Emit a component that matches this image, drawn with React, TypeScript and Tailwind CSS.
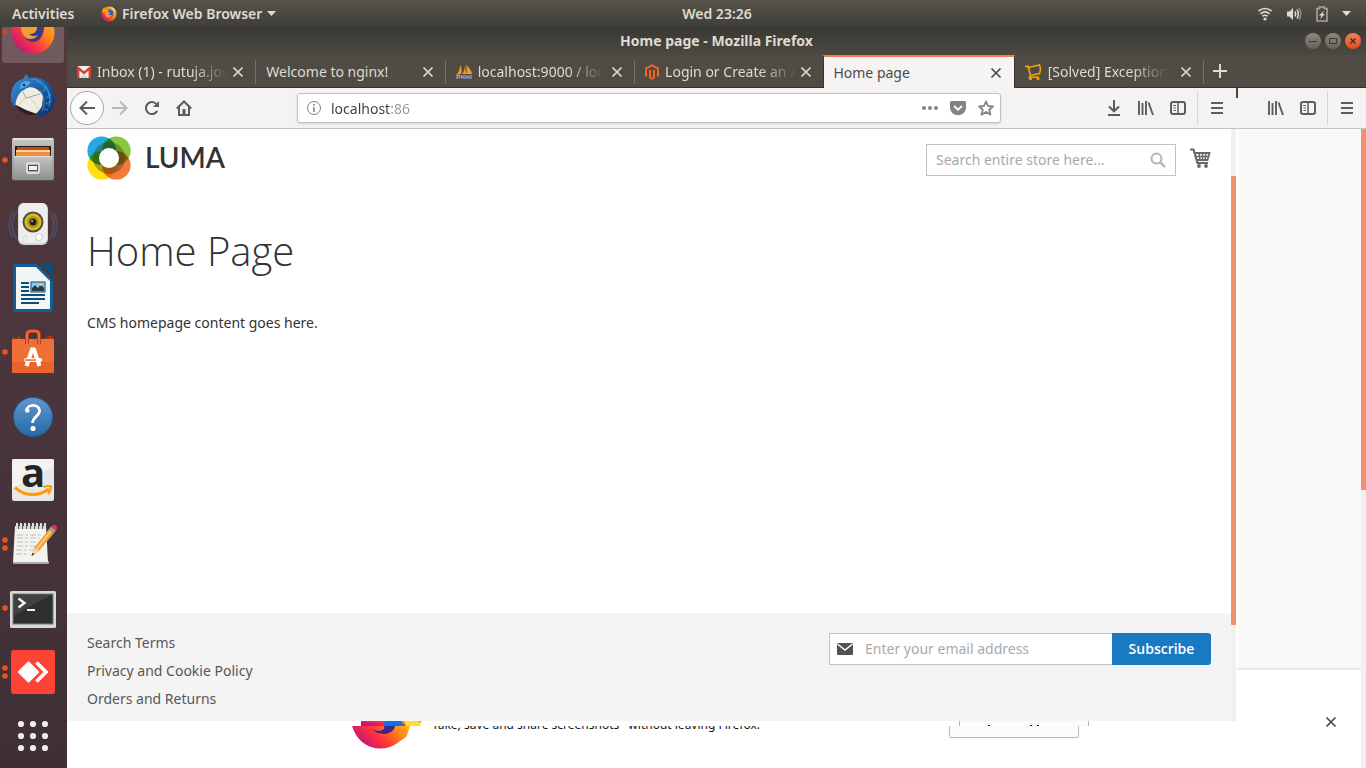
import React from "react";

type IconProps = { className?: string };

const UI = "font-['Noto_Sans',sans-serif]";

/* ---------- dock drawings (each slot is 67 x 64) ---------- */

function FirefoxArt() {
  return (
    <g>
      <defs>
        <linearGradient id="fxBody" x1="1" y1="0.1" x2="0.1" y2="0.9">
          <stop offset="0" stopColor="#ffd53a" />
          <stop offset="0.4" stopColor="#ff8a16" />
          <stop offset="0.72" stopColor="#fb3148" />
          <stop offset="1" stopColor="#b5177f" />
        </linearGradient>
        <linearGradient id="fxGlobe" x1="0.8" y1="0" x2="0.2" y2="1">
          <stop offset="0" stopColor="#0a84ff" />
          <stop offset="1" stopColor="#38207a" />
        </linearGradient>
      </defs>
      <circle cx="33" cy="32" r="21.5" fill="url(#fxBody)" />
      <circle cx="34" cy="30" r="11.5" fill="url(#fxGlobe)" />
      <path d="M12 29 C13 21 17 15 20 12 L21 18 C24 17 28 18 30 20 L34 23 C31 24 30 25 30 27 L37 29 C37 33 34 33 31 33 C35 37 40 36 44 33 C41 41 33 44 26 41 C21 38 19 31 23 26 Z" fill="#ff9a1c" />
      <path d="M38 11 C47 13 53 20 54 28 C51 23 46 20 42 19 Z" fill="#ffe14a" />
    </g>
  );
}

function DockFirefox() {
  return (
    <g>
      <defs>
        <linearGradient id="dfBody" x1="1" y1="0" x2="0.1" y2="0.9">
          <stop offset="0" stopColor="#ffc02e" />
          <stop offset="0.4" stopColor="#ff8a16" />
          <stop offset="0.7" stopColor="#fb3148" />
          <stop offset="1" stopColor="#b5177f" />
        </linearGradient>
      </defs>
      <circle cx="33" cy="32.500" r="21.500" fill="url(#dfBody)" />
      <path d="M23 22 H44 C45 30 42 42 33 42 C28 42 25 38 24 35 Z" fill="#3c3a8c" />
      <path d="M22 22 L37 27 C37 33 33 34 29 34 C31 36 35 37 38 35 C35 40 27 40 24 36 C21 32 20 26 22 22 Z" fill="#f2a02e" />
    </g>
  );
}

function Thunderbird() {
  return (
    <g>
      <defs>
        <linearGradient id="tb" x1="0" y1="0" x2="1" y2="1">
          <stop offset="0" stopColor="#3f95d6" />
          <stop offset="0.5" stopColor="#1860a8" />
          <stop offset="1" stopColor="#0b2c66" />
        </linearGradient>
      </defs>
      <ellipse cx="32" cy="34" rx="18" ry="17" fill="#2a2024" />
      <path d="M13 32 L20 26 C28 21 38 22 43 32 L42 44 L37 50 L26 46 L14 40 Z" fill="#efece4" />
      <path d="M23 28 L26 34 L40 30" fill="none" stroke="#a9a59b" strokeWidth="1" />
      <path d="M26 34 L17 42 M30 33 L39 46" stroke="#d5d1c6" strokeWidth="1" />
      <path d="M11 35 C10 24 16 16 23 15 L26 10 L29 14 C43 11 54 21 55 34 C55 44 49 52 37 54 L42 49 L35 50 C43 45 45 36 42 30 C38 22 30 21 24 26 C19 28 16 34 15 43 C12 40 11 38 11 35 Z" fill="url(#tb)" />
      <path d="M31 15 C42 15 50 24 50 35 M36 17 C47 22 52 31 49 43 M40 26 C45 33 45 41 42 47 M46 22 L43 28 M51 30 L46 34 M52 37 L46 40 M48 46 L44 45" fill="none" stroke="#5cb8ef" strokeWidth="1" opacity="0.6" />
      <path d="M20 25 C20 18 25 16 31 18 C28 22 25 23 20 25 Z" fill="#5fb6ee" opacity="0.8" />
      <circle cx="24" cy="21" r="1.2" fill="#0a2350" />
    </g>
  );
}

function Files() {
  return (
    <g>
      <defs>
        <linearGradient id="fl" x1="0" y1="0" x2="0" y2="1">
          <stop offset="0" stopColor="#c4c4c2" />
          <stop offset="1" stopColor="#8f8f8d" />
        </linearGradient>
      </defs>
      <rect x="12" y="10" width="42" height="42" rx="2" fill="url(#fl)" />
      <rect x="13" y="10" width="40" height="2" fill="#e1e1df" />
      <rect x="15" y="18" width="36" height="11" fill="#241a15" />
      <rect x="17" y="19" width="32" height="4" fill="#c84a0e" />
      <rect x="16" y="22" width="34" height="2" fill="#ffd9a0" />
      <rect x="16" y="24" width="34" height="5" fill="#f08a3c" />
      <path d="M14 28 H52 V52 H14 Z" fill="url(#fl)" />
      <path d="M14 28.500 H52" stroke="#dededc" />
      <rect x="27" y="35" width="12" height="10" rx="2" fill="none" stroke="#dcdcda" strokeWidth="2" />
      <rect x="28.500" y="37.500" width="9" height="5" fill="#f1f1ef" stroke="#555" />
      <path d="M12 52.500 H54" stroke="#55504f" />
    </g>
  );
}

function Rhythmbox() {
  return (
    <g>
      <path d="M13 20 C8 28 8 38 13 46 M17 19 C11 28 11 38 17 47 M53 20 C58 28 58 38 53 46 M49 19 C55 28 55 38 49 47" fill="none" stroke="#53628f" strokeWidth="2" opacity="0.45" />
      <rect x="18" y="11" width="30" height="42" rx="6" fill="#d6d7d4" />
      <rect x="19" y="11" width="28" height="40" rx="5" fill="#eeefec" />
      <circle cx="33" cy="30" r="10.500" fill="#4d4e4d" />
      <circle cx="33" cy="30" r="8.500" fill="#dcbc18" />
      <circle cx="33" cy="30" r="6" fill="#b8960c" />
      <circle cx="33" cy="30" r="3.500" fill="#22242c" />
      <circle cx="32" cy="29" r="1.200" fill="#8a93a8" />
      <circle cx="39" cy="45" r="3.500" fill="#fff" stroke="#c9cac7" />
      <rect x="23" y="44" width="4" height="5" rx="1" fill="none" stroke="#dfe0dd" />
    </g>
  );
}

function Writer() {
  return (
    <g>
      <path d="M13 10 Q13 8 15 8 H37 L53 24 V54 Q53 56 51 56 H15 Q13 56 13 54 Z" fill="#0d5f96" />
      <path d="M41 8 H51 Q53 8 53 10 V20 Z" fill="#0a4f80" />
      <path d="M16 11 H36 L50 25 V53 H16 Z" fill="#f3f4f4" />
      <path d="M21 27 H29 M21 31 H29 M21 35 H29 M21 39 H45 M21 43 H45 M21 47 H39" stroke="#0b4f7d" strokeWidth="2" />
      <rect x="31" y="26" width="14" height="10" fill="#8dcbee" stroke="#0b4f7d" />
      <path d="M32 35 V32 L35 29 L38 32 L41 28 L44 32 V35 Z" fill="#2d3b40" />
      <circle cx="41" cy="28.500" r="1.500" fill="#f6c542" />
    </g>
  );
}

function Software() {
  return (
    <g>
      <path d="M13 16 L16 19 L19 16 L22 19 H44 L48 16 L53 16 V24 H13 Z" fill="#a6390f" />
      <rect x="12" y="19" width="42" height="34" rx="1" fill="#e9642c" />
      <rect x="12" y="19" width="42" height="23" fill="#f0743b" opacity="0.75" />
      <path d="M27 24 V15 Q27 11 31 11 H35 Q39 11 39 15 V24" fill="none" stroke="#b63d12" strokeWidth="4" />
      <path d="M27 24 V15 Q27 11 31 11 H35 Q39 11 39 15 V24" fill="none" stroke="#ef6a36" strokeWidth="2.200" />
      <path d="M26.500 46 L32 29.500 H34 L39.500 46" fill="none" stroke="#fff" strokeWidth="4" />
      <rect x="24" y="38" width="18" height="4" rx="2" fill="#fff" />
      <rect x="25" y="39.300" width="11" height="1.500" fill="#e9642c" />
    </g>
  );
}

function Help() {
  return (
    <g>
      <defs>
        <linearGradient id="hp" x1="0" y1="0" x2="0" y2="1">
          <stop offset="0" stopColor="#6098d0" />
          <stop offset="1" stopColor="#2469a6" />
        </linearGradient>
      </defs>
      <circle cx="33" cy="33" r="19.500" fill="url(#hp)" stroke="#285f93" />
      <path d="M26.500 27 C26.500 19.500 39.500 19.500 39.500 27 C39.500 32 32.500 32.500 32.500 39" fill="none" stroke="#fff" strokeWidth="2.600" />
      <path d="M38.500 23.500 C42 29 36 32 33.500 36" fill="none" stroke="#fff" strokeWidth="2.400" />
      <circle cx="27.300" cy="26.500" r="2.200" fill="#fff" />
      <circle cx="33" cy="44.500" r="2.600" fill="#fff" />
    </g>
  );
}

function Amazon() {
  return (
    <g>
      <rect x="12" y="11" width="42" height="42" rx="2" fill="#e7e7e7" />
      <path d="M12 40 L54 18 V13 Q54 11 52 11 H14 Q12 11 12 13 Z" fill="#f3f3f3" />
      <text x="33" y="39" textAnchor="middle" fontFamily="Open Sans, sans-serif" fontWeight="700" fontSize="40" fill="#252525">a</text>
      <path d="M15 39.500 C24 48 38 49 49 41" fill="none" stroke="#ff9900" strokeWidth="3" />
      <path d="M43.500 39 C47 37.500 50 38 51 38.500 C51 41 50 44 48 46" fill="none" stroke="#ff9900" strokeWidth="2" />
    </g>
  );
}

function Notes() {
  return (
    <g transform="translate(0 -1)">
      <rect x="13" y="50" width="36" height="3" rx="1" fill="#a9aaa6" />
      <path d="M15 15 H46 L48 51 H13 Z" fill="#f3f3f0" />
      <path d="M17 24 H43 M17 27 H40 M17 31 H38 M17 35 H36 M16 39 H33 M16 43 H30" stroke="#c0c1bd" strokeWidth="1" strokeDasharray="6 2 3 2" />
      <path d="M18.500 13 V18 M22.500 13 V18 M26.500 13 V18 M30.500 13 V18 M34.500 13 V18 M38.500 13 V18 M42.500 13 V18" stroke="#57585a" strokeWidth="1.500" />
      <path d="M17 12 V18 M21 12 V18 M25 12 V18 M29 12 V18 M33 12 V18 M37 12 V18 M41 12 V18 M45 12 V18" stroke="#dedfdc" strokeWidth="2" />
      <path d="M31.500 45 L34 37 L49 18 L54 22 L39 40 Z" fill="#f1a23c" />
      <path d="M36 39 L51 20" stroke="#ffd083" strokeWidth="1.500" />
      <path d="M31.500 45 L34 37 L39 40 Z" fill="#ecd6b0" />
      <path d="M31.500 45 L32.500 42 L34.500 43 Z" fill="#222" />
      <path d="M49 18 L51 15.500 L56 19.500 L54 22 Z" fill="#9da0a3" />
      <path d="M51 15.500 Q54 13 56.500 15 Q58 17 56 19.500 Z" fill="#dc3347" />
    </g>
  );
}

function TerminalArt() {
  return (
    <g transform="translate(0 1.500)">
      <rect x="10" y="13.500" width="46" height="37" rx="1.500" fill="#d9dad7" />
      <rect x="13" y="16.500" width="40" height="30" fill="#2e302f" stroke="#797b78" />
      <path d="M14 17 H52 L14 38 Z" fill="#4c4e4c" opacity="0.6" />
      <path d="M18.500 21 L24.500 25.500 L18.500 30" fill="none" stroke="#f4f4f2" strokeWidth="2.400" />
      <path d="M27 32.500 H35" stroke="#f4f4f2" strokeWidth="2" />
    </g>
  );
}

function AnyDesk() {
  return (
    <g>
      <rect x="11" y="10" width="44" height="44" rx="3" fill="#fd4336" />
      <path d="M28.500 21 L39.500 32 L28.500 43 L17.500 32 Z" fill="#fff" />
      <path d="M36.500 22.500 L46 32 L36.500 41.500" fill="none" stroke="#fff" strokeWidth="3.600" />
    </g>
  );
}

function AppGrid() {
  return (
    <g fill="#efedec">
      {[20, 32, 44].map((y) =>
        [21, 33, 45].map((x) => <circle key={`${x}-${y}`} cx={x} cy={y} r="3.1" />)
      )}
    </g>
  );
}

const dockItems: { name: string; art: React.ReactNode; dots: number }[] = [
  { name: "Thunderbird", art: <Thunderbird />, dots: 0 },
  { name: "Files", art: <Files />, dots: 1 },
  { name: "Rhythmbox", art: <Rhythmbox />, dots: 0 },
  { name: "LibreOffice Writer", art: <Writer />, dots: 0 },
  { name: "Ubuntu Software", art: <Software />, dots: 1 },
  { name: "Help", art: <Help />, dots: 0 },
  { name: "Amazon", art: <Amazon />, dots: 0 },
  { name: "Text Editor", art: <Notes />, dots: 2 },
  { name: "Terminal", art: <TerminalArt />, dots: 1 },
  { name: "AnyDesk", art: <AnyDesk />, dots: 2 },
  { name: "Show Applications", art: <AppGrid />, dots: 0 },
];

function Dots({ count }: { count: number }) {
  if (count === 1) return <circle cx="5" cy="32" r="2.800" fill="#ea5420" />;
  if (count === 2)
    return (
      <g fill="#ea5420">
        <circle cx="5" cy="28" r="2.800" />
        <circle cx="5" cy="36" r="2.800" />
      </g>
    );
  return null;
}

function Dock() {
  return (
    <nav aria-label="Dock" className="flex w-[67px] shrink-0 flex-col bg-linear-to-b from-[#53383b] via-[#49353b] to-[#3f3036]">
      <button aria-label="Firefox" className="block h-[37px] w-full overflow-hidden">
        <svg viewBox="0 27 67 37" className="h-[37px] w-full">
          <rect x="2" y="-1" width="62" height="64" rx="3" fill="#705a5d" />
          <DockFirefox />
          <circle cx="5" cy="32" r="2.800" fill="#c24a29" />
        </svg>
      </button>
      {dockItems.map((d) => (
        <button key={d.name} aria-label={d.name} className="block h-16 w-full shrink-0">
          <svg viewBox="0 0 67 64" className="h-16 w-full">
            {d.art}
            <Dots count={d.dots} />
          </svg>
        </button>
      ))}
    </nav>
  );
}

/* ---------- system bar ---------- */

function SystemBar() {
  return (
    <header className={`${UI} grid h-[27px] shrink-0 grid-cols-[1fr_auto_1fr] items-center bg-linear-to-b from-[#57534a] to-[#3f3e39] text-sm font-semibold text-[#dfdbd2]`}>
      <div className="flex items-center pl-3">
        <button className="w-[69px] text-left whitespace-nowrap">Activities</button>
        <button className="ml-5 flex items-center gap-[5px]">
          <svg viewBox="10 9 46 46" className="size-4"><FirefoxArt /></svg>
          Firefox Web Browser
          <svg viewBox="0 0 9 5" className="h-[5px] w-[9px]"><path d="M0 0 H9 L4.500 5 Z" fill="#dfdbd2" /></svg>
        </button>
      </div>
      <time className="pl-17">Wed 23:26</time>
      <div className="flex items-center justify-end gap-[14px] pr-[15px]">
        <svg viewBox="0 0 14 14" className="size-[14px]" fill="none" stroke="#dfdbd2" strokeWidth="1.600">
          <path d="M0.500 4 Q7 -1 13.500 4 M2.500 6.800 Q7 3 11.500 6.800 M4.500 9.300 Q7 7.200 9.500 9.300" />
          <circle cx="7" cy="12" r="1.600" fill="#dfdbd2" stroke="none" />
        </svg>
        <svg viewBox="0 0 16 14" className="h-[14px] w-4" fill="none" strokeWidth="1.500">
          <path d="M1 4.500 H3.500 L7 1 V13 L3.500 9.500 H1 Z" fill="#dfdbd2" />
          <path d="M9 4.500 Q10.500 7 9 9.500 M11 2.500 Q13.500 7 11 11.500" stroke="#dfdbd2" />
          <path d="M13 1 Q16.500 7 13 13" stroke="#8e8b84" />
        </svg>
        <svg viewBox="0 0 12 16" className="h-4 w-3" fill="none">
          <path d="M1 2.500 H3.500 V1 H8.500 V2.500 H11 V15 H1 Z" stroke="#a9a69e" strokeWidth="1.600" />
          <path d="M8 4.500 L3 9.500 H5.500 L4 13 L9 8 H6.500 Z" fill="#dfdbd2" />
        </svg>
        <svg viewBox="0 0 9 5" className="h-[5px] w-[9px]"><path d="M0 0 H9 L4.500 5 Z" fill="#dfdbd2" /></svg>
      </div>
    </header>
  );
}

/* ---------- browser window ---------- */

function TitleBar() {
  return (
    <div className={`${UI} grid h-7 shrink-0 grid-cols-[1fr_auto_1fr] items-center bg-linear-to-b from-[#393834] to-[#4c4942] text-sm font-bold text-[#dfdbd2]`}>
      <span />
      <h2>Home page - Mozilla Firefox</h2>
      <div className="flex justify-end gap-1 pr-[5px]">
        <button aria-label="Minimize" className="size-4 rounded-full bg-linear-to-b from-[#8b887f] to-[#65625a]">
          <svg viewBox="0 0 16 16"><path d="M4 8.500 H12" stroke="#3a3935" /></svg>
        </button>
        <button aria-label="Maximize" className="size-4 rounded-full bg-linear-to-b from-[#8b887f] to-[#65625a]">
          <svg viewBox="0 0 16 16"><rect x="4.500" y="5.500" width="7" height="5" fill="none" stroke="#3a3935" /></svg>
        </button>
        <button aria-label="Close" className="size-4 rounded-full bg-linear-to-b from-[#f58057] to-[#e2491b]">
          <svg viewBox="0 0 16 16"><path d="M5.500 5.500 L10.500 10.500 M10.500 5.500 L5.500 10.500" stroke="#40302a" strokeWidth="1.400" /></svg>
        </button>
      </div>
    </div>
  );
}

function Gmail() {
  return (
    <svg viewBox="0 0 14 12" className="h-3 w-[14px] shrink-0">
      <rect width="14" height="12" rx="1" fill="#f1efee" />
      <path d="M1.200 12 V2 L7 7 L12.800 2 V12" fill="none" stroke="#d93f31" strokeWidth="2.400" />
      <path d="M3 12 L7 8 L11 12 Z" fill="#d8d5d3" />
    </svg>
  );
}

function PhpMyAdmin() {
  return (
    <svg viewBox="0 0 16 16" className="size-4 shrink-0">
      <path d="M4 1 C4 5 3 8 0 11 L5 10 C6 7 6 4 4 1 Z M9 0 C9 5 8 8 6 10 L10 10 Z M10 1 C14 4 16 8 16 10 L10 10 C11 7 11 4 10 1 Z" fill="#f29a1d" />
      <path d="M1 15 V11.500 H3.500 V13.500 H1 M5.500 11 V15 M5.500 13.200 H8 V11 M8 13 V15 M10 15 V12 L11.500 13.500 L13 12 V15 M15 11 V15" fill="none" stroke="#9d9ccb" strokeWidth="1.200" />
    </svg>
  );
}

function MagentoMark() {
  return (
    <svg viewBox="0 0 14 16" className="h-4 w-[14px] shrink-0" fill="none" stroke="#f26322" strokeWidth="2">
      <path d="M1 12.500 V4.500 L7 1.200 L13 4.500 V12.500 M5 6 V13.500 L7 14.800 L9 13.500 V6" />
    </svg>
  );
}

function CartMark() {
  return (
    <svg viewBox="0 0 17 16" className="h-4 w-[17px] shrink-0" fill="none" stroke="#f0a500" strokeWidth="1.600">
      <path d="M0 2.500 L3 2.200 L5.500 11.500 L14.500 9.500 Q16.300 5 14.500 1 L3.500 3.500 M5.500 11.500 L4.500 13.500 L14 13" />
      <circle cx="5.500" cy="14.800" r="0.700" /><circle cx="13" cy="14.500" r="0.700" />
    </svg>
  );
}

function Cross({ className }: IconProps) {
  return (
    <svg viewBox="0 0 12 12" className={className} fill="none" stroke="currentColor" strokeWidth="1.700">
      <path d="M1.500 1.500 L10.500 10.500 M10.500 1.500 L1.500 10.500" />
    </svg>
  );
}

const tabs: { title: string; icon?: React.ReactNode; active?: boolean; line?: boolean }[] = [
  { title: "Inbox (1) - rutuja.jos", icon: <Gmail />, line: true },
  { title: "Welcome to nginx!", line: true },
  { title: "localhost:9000 / loc", icon: <PhpMyAdmin />, line: true },
  { title: "Login or Create an A", icon: <MagentoMark /> },
  { title: "Home page", active: true },
  { title: "[Solved] Exception", icon: <CartMark />, line: true },
];

function TabStrip() {
  return (
    <div className={`${UI} flex h-[33px] shrink-0 bg-[#504c45] text-sm text-[#dfdbd2]`}>
      {tabs.map((t) => (
        <div
          key={t.title}
          className={
            t.active
              ? "-ml-px flex min-w-0 flex-[191] border-x border-t-2 border-x-[#33322e] border-t-[#f37f55] bg-[#f5f4f2] pr-3 pl-[9px] text-[#4a4a4a]"
              : "flex min-w-0 flex-[190] border-b border-[#33322e] pt-px pr-3 pl-[10px]"
          }
        >
          <button className="flex min-w-0 flex-1 items-center gap-[6px] text-left">
            {t.icon}
            <span className={t.icon ? "overflow-hidden whitespace-nowrap [mask-image:linear-gradient(to_left,transparent,#000_36px)]" : "whitespace-nowrap"}>
              {t.title}
            </span>
          </button>
          <button aria-label={`Close ${t.title}`} className="ml-1 shrink-0">
            <Cross className="size-3" />
          </button>
          {t.line && <span className="-mr-3 ml-[11px] h-6 w-px self-center bg-[#77736b]" />}
        </div>
      ))}
      <div className="w-[162px] border-b border-[#33322e]">
        <button aria-label="New tab" className="flex h-full w-8 items-center justify-center">
          <svg viewBox="0 0 14 14" className="size-[14px]" stroke="#dfdbd2" strokeWidth="2"><path d="M7 0 V14 M0 7 H14" /></svg>
        </button>
      </div>
    </div>
  );
}

function ToolButton({ label, children }: { label: string; children: React.ReactNode }) {
  return (
    <button aria-label={label} className="flex size-8 shrink-0 items-center justify-center text-[#5c5c5b]">
      <svg viewBox="0 0 16 16" className="size-4" fill="none" stroke="currentColor" strokeWidth="2">
        {children}
      </svg>
    </button>
  );
}

function PanelButtons() {
  return (
    <>
      <ToolButton label="Library">
        <path d="M1 1 V15 M4.500 3 V15 M8 1 V15 M10.500 2.500 L15 15" strokeWidth="1.900" />
      </ToolButton>
      <ToolButton label="Sidebars">
        <rect x="1" y="2" width="14" height="12" rx="2" />
        <path d="M8 2 V14" strokeWidth="1.500" />
        <path d="M3 5.500 H6 M3.500 8 H6 M3.500 10.500 H6" strokeWidth="1" />
      </ToolButton>
      <span className="mx-[3px] h-[34px] w-px bg-[#d6d4d1]" />
      <ToolButton label="Menu">
        <path d="M2 3 H14 M2 8 H14 M2 13 H14" />
      </ToolButton>
    </>
  );
}

function Toolbar() {
  return (
    <div className="flex h-[41px] shrink-0 border-b border-[#c5c3c0] bg-[#f4f3f1]">
      <div className="flex min-w-0 flex-1 items-center pr-[3px] pl-[3px]">
        <button aria-label="Back" className="flex size-[34px] shrink-0 items-center justify-center rounded-full border border-[#a9a7a4] bg-[#fcfcfc] text-[#5c5c5b]">
          <svg viewBox="0 0 16 16" className="size-4" fill="none" stroke="currentColor" strokeWidth="2"><path d="M16 8 H1.500 M8 1.500 L1.500 8 L8 14.500" /></svg>
        </button>
        <button aria-label="Forward" className="flex size-8 shrink-0 items-center justify-center text-[#b9b8b6]">
          <svg viewBox="0 0 16 16" className="size-4" fill="none" stroke="currentColor" strokeWidth="2"><path d="M0 8 H14.500 M8 1.500 L14.500 8 L8 14.500" /></svg>
        </button>
        <ToolButton label="Reload">
          <path d="M13.200 11 A6 6 0 1 1 12.500 4.200" />
          <path d="M15 1 V7 H9 Z" fill="currentColor" stroke="none" />
        </ToolButton>
        <ToolButton label="Home">
          <path d="M0.800 8.500 L8 1.500 L15.200 8.500 M3 7 V15 H13 V7" />
          <path d="M8 9 V15" strokeWidth="3" />
        </ToolButton>
        <div className={`${UI} mx-[97px] flex h-[30px] min-w-0 flex-1 items-center rounded-[3px] border border-[#c4c2bf] bg-white pr-[6px] pl-[9px] shadow-sm`}>
          <svg viewBox="0 0 14 14" className="size-[14px] shrink-0" fill="none" stroke="#838383"><circle cx="7" cy="7" r="6.500" /><path d="M7 6 V11 M7 3 V4.700" strokeWidth="1.500" /></svg>
          <input
            aria-label="Address"
            defaultValue="localhost:86"
            className="ml-[10px] min-w-0 flex-1 bg-[linear-gradient(to_right,#3d3d3d_59px,#999_59px)] bg-clip-text pt-px text-sm text-transparent outline-none"
          />
          <svg viewBox="0 0 16 16" className="mr-3 size-4 shrink-0" fill="#838383"><circle cx="2" cy="8" r="2" /><circle cx="8" cy="8" r="2" /><circle cx="14" cy="8" r="2" /></svg>
          <svg viewBox="0 0 16 16" className="mr-3 size-4 shrink-0"><path d="M1.500 1 H14.500 Q16 1 16 2.500 V7 C16 18 0 18 0 7 V2.500 Q0 1 1.500 1 Z" fill="#838383" /><path d="M4 6 L8 9.700 L12 6" fill="none" stroke="#fff" strokeWidth="2" /></svg>
          <svg viewBox="0 0 16 16" className="size-4 shrink-0" fill="none" stroke="#838383" strokeWidth="1.800"><path d="M8 1.500 L10 6 L15 6.500 L11.200 9.700 L12.500 14.700 L8 12 L3.500 14.700 L4.800 9.700 L1 6.500 L6 6 Z" strokeLinejoin="round" /></svg>
        </div>
        <ToolButton label="Downloads">
          <path d="M8 0 V11 M3 6.500 L8 11.300 L13 6.500 M2 15 H14" />
        </ToolButton>
        <PanelButtons />
      </div>
      <div className="flex w-[130px] shrink-0 items-center justify-end pr-[3px]">
        <span className="mr-auto h-[10px] w-[2px] self-start bg-[#4a4841]" />
        <PanelButtons />
      </div>
    </div>
  );
}

/* ---------- shop page ---------- */

function LumaLogo() {
  return (
    <a href="#home" className="flex items-center gap-[14px]">
      <svg viewBox="-22 -22 44 44" className="isolate size-11">
        <g className="[&>circle]:mix-blend-multiply">
          <circle cx="-7.300" cy="-7.300" r="14.300" fill="#26a9e0" />
          <circle cx="7.300" cy="-7.300" r="14.300" fill="#8bc53f" />
          <circle cx="7.300" cy="7.300" r="14.300" fill="#f4793b" />
          <circle cx="-7.300" cy="7.300" r="14.300" fill="#ffdf13" />
        </g>
        <circle r="13" fill="none" stroke="#3a3a1c" strokeWidth="6" opacity="0.4" />
        <circle r="10" fill="#fff" />
      </svg>
      <span className="pb-[2px] font-[Lato,sans-serif] text-[28px] leading-none font-semibold text-[#333334]">LUMA</span>
    </a>
  );
}

function ShopPage() {
  return (
    <div className={`${UI} flex min-w-0 flex-1 flex-col bg-white text-sm text-[#333]`}>
      <header className="flex items-start justify-between pt-[7px] pr-5 pl-5">
        <LumaLogo />
        <div className="flex items-start gap-[14px] pt-2">
          <div className="flex h-8 w-[250px] items-center border border-[#c2c2c2] bg-white pr-[9px] pl-[9px]">
            <input aria-label="Search" placeholder="Search entire store here..." className="min-w-0 flex-1 outline-none placeholder:text-[#a9a9a9]" />
            <svg viewBox="0 0 16 16" className="size-4 shrink-0" fill="none" stroke="#b5b5b5" strokeWidth="2"><circle cx="6.500" cy="6.500" r="5" /><path d="M10 10 L15 15" strokeWidth="2.400" /></svg>
          </div>
          <button aria-label="My Cart" className="pt-1">
            <svg viewBox="0 0 21 21" className="size-[21px]" fill="none" stroke="#6b6769">
              <path d="M0 1.500 H3.500 L7.500 15 H18" strokeWidth="2.200" />
              <path d="M4.500 5 H19.500 L17.500 12 H6.500" strokeWidth="1.800" />
              <path d="M6 8.500 H18.500 M9 5 L10 12 M12.500 5 V12 M16 5 L15 12" strokeWidth="1.500" />
              <circle cx="9" cy="18" r="1.900" fill="#6b6769" stroke="none" /><circle cx="16" cy="18" r="1.900" fill="#6b6769" stroke="none" />
            </svg>
          </button>
        </div>
      </header>
      <main className="flex-1 px-5 pt-11">
        <h1 className="font-['Open_Sans',sans-serif] text-[40px] leading-[54px] font-light">Home Page</h1>
        <p className="pt-[35px] leading-5">CMS homepage content goes here.</p>
      </main>
      <footer className="flex h-[108px] shrink-0 justify-between bg-[#f4f4f4] px-5 pt-5 text-[#575757]">
        <ul className="flex flex-col gap-2 leading-5">
          <li><a href="#terms">Search Terms</a></li>
          <li><a href="#privacy">Privacy and Cookie Policy</a></li>
          <li><a href="#orders">Orders and Returns</a></li>
        </ul>
        <form className="flex h-8" onSubmit={(e) => e.preventDefault()}>
          <div className="flex w-[283px] items-center gap-3 border border-r-0 border-[#c2c2c2] bg-white pl-[7px]">
            <svg viewBox="0 0 16 12" className="h-3 w-4 shrink-0"><rect width="16" height="12" rx="1" fill="#545153" /><path d="M0.500 1 L8 7 L15.500 1" fill="none" stroke="#fff" strokeWidth="1.500" /></svg>
            <input type="email" aria-label="Email address" placeholder="Enter your email address" className="min-w-0 flex-1 outline-none placeholder:text-[#a9a9a9]" />
          </div>
          <button className="w-[99px] rounded-r-[3px] bg-[#1979c3] font-['Open_Sans',sans-serif] font-semibold text-white">Subscribe</button>
        </form>
      </footer>
    </div>
  );
}

/* strip of the window underneath, showing only the lower edge of its banner */
function BannerStrip() {
  return (
    <div className={`${UI} flex h-[47px] shrink-0 items-start overflow-hidden bg-white text-[#15141a]`}>
      <svg viewBox="0 0 70 28" className="ml-[285px] h-7 w-[70px] shrink-0">
        <defs>
          <linearGradient id="bn" x1="0" y1="0.400" x2="1" y2="0">
            <stop offset="0" stopColor="#c4177c" />
            <stop offset="0.350" stopColor="#ff2f3c" />
            <stop offset="0.750" stopColor="#ff8a16" />
            <stop offset="1" stopColor="#ffb41e" />
          </linearGradient>
        </defs>
        <path d="M9 0 H70 L66 5 H9 Z" fill="url(#bn)" />
        <path d="M52 0 H66 L69 5 H54 Z" fill="#ffdc35" />
        <path d="M33 0 H49 L52 5 H31 Z" fill="#0a72f0" />
        <path d="M0 5 H58 C56 10 56 13 54 16 L44 23 C34 30 9 32 0 5 Z" fill="url(#bn)" />
        <path d="M20 8 C27 12 34 9 32 5 H43 C41 15 26 15 20 8 Z" fill="#45218c" />
      </svg>
      <div className="mt-[5px] ml-[10px] flex h-3 w-[334px] items-start overflow-hidden text-[12px] leading-[12px] whitespace-nowrap">
        <p className="-mt-[7px] flex w-full justify-between pr-[6px]">
          <span>Take, save and share screenshots</span>
          <span>without leaving Firefox.</span>
        </p>
      </div>
      <div className="ml-auto flex w-[140px] flex-col">
        <div className="ml-[10px] flex h-[5px] w-[130px] gap-10 border-x border-[#b9b9bb] bg-[#fbfbfb] pt-1 pl-7">
          <span className="h-px w-[2px] bg-[#15141a]" />
          <span className="h-px w-[9px] border-x-2 border-[#15141a]" />
        </div>
        <button aria-label="Try it" className="h-[12px] w-[130px] rounded-b-[2px] border border-t-0 border-[#b9b9bb] bg-[#fbfbfb]" />
      </div>
      <span className="w-[147px] shrink-0" />
    </div>
  );
}

function UnderlyingPane() {
  return (
    <aside className="flex w-[130px] shrink-0 bg-[#f9f9fa]">
      <div className="flex flex-1 flex-col">
        <div className="min-h-[540px] flex-1 border-b-2 border-l-2 border-b-[#e8e8e8] border-l-white" />
        <div className="flex h-[98px] items-start justify-end bg-white pt-[46px] pr-[24px]">
          <button aria-label="Dismiss" className="text-[#4a4a4f]"><Cross className="size-3" /></button>
        </div>
      </div>
      <div className="flex w-[5px] flex-col bg-[#f1f0ee]">
        <span className="h-[361px] bg-[#f1906b]" />
      </div>
    </aside>
  );
}

export default function App() {
  return (
    <div className="flex min-h-screen flex-col overflow-hidden bg-[#3f3e39]">
      <SystemBar />
      <div className="flex flex-1">
        <Dock />
        <section className="flex min-w-0 flex-1 flex-col">
          <TitleBar />
          <TabStrip />
          <Toolbar />
          <div className="flex flex-1">
            <div className="flex min-w-0 flex-1 flex-col">
              <div className="flex flex-1">
                <ShopPage />
                <div className="flex w-[5px] shrink-0 flex-col bg-[#f1f0ee] pt-[47px]">
                  <span className="h-[449px] rounded-[1px] bg-[#f1906b]" />
                </div>
              </div>
              <BannerStrip />
            </div>
            <UnderlyingPane />
          </div>
        </section>
      </div>
    </div>
  );
}
